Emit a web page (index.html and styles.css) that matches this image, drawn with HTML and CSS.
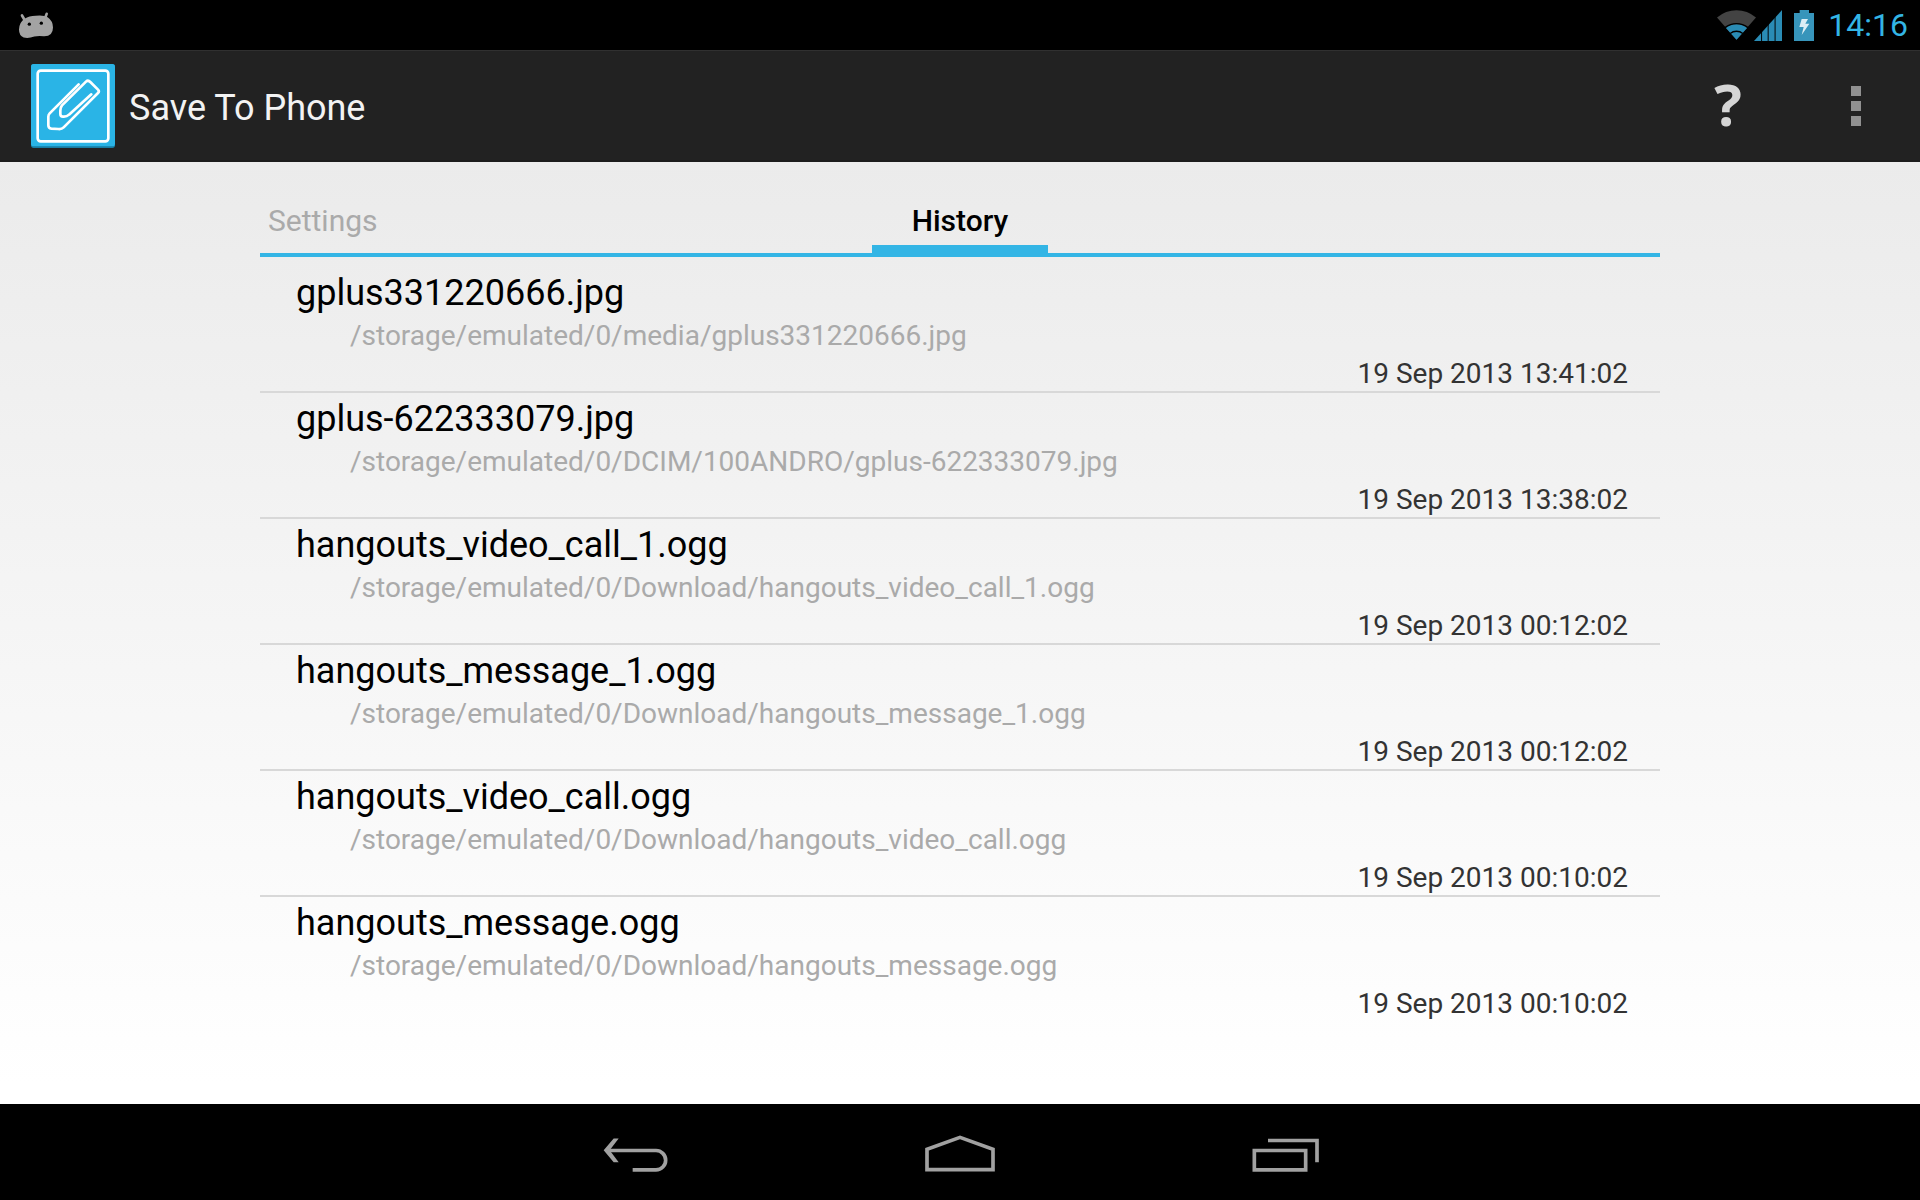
FILE: index.html
```
<!DOCTYPE html>
<html lang="en">
<head>
  <meta charset="UTF-8">
  <title>Save To Phone</title>
  <link rel="stylesheet" href="styles.css">
</head>
<body>
  <div class="status-bar">
    <svg class="robot" viewBox="0 0 102 80" width="34" height="27">
      <path d="M9 10 16 22M83 5 79 16" stroke="#a3a3a3" stroke-width="8" stroke-linecap="round"/>
      <path d="M17 20Q30 11 50 11Q72 8 86 15Q102 26 102 46Q102 73 74 72Q58 70 46 73Q28 80 14 76Q0 70 0 52Q1 30 17 20Z" fill="#a3a3a3"/>
      <circle cx="31" cy="36" r="5"/><circle cx="67" cy="33" r="5"/>
    </svg>
    <div class="indicators">
      <svg viewBox="0 0 118 90" width="39" height="30">
        <path d="M59 90 0 22Q26 0 59 0T118 22Z" fill="#434343"/>
        <path d="M59 90 27 54Q40 43 59 43T91 54Z" fill="#2a8cb5"/>
        <path d="M24 53Q40 41 59 41T94 53M40 71Q48 64 59 64T78 71" fill="none" stroke="#000" stroke-width="4"/>
      </svg>
      <svg class="signal" viewBox="0 0 85 94" width="28" height="31">
        <path d="M0 94 85 0V94Z" fill="#2a8cb5"/>
        <path d="M23 60V94M43 40V94M64 15V94" stroke="#000" stroke-width="3"/>
      </svg>
      <svg class="battery" viewBox="0 0 60 93" width="20" height="31">
        <path d="M0 9H17V0H45V9H60V93H0Z" fill="#3795bb"/>
        <path d="M23 27H42L34 41H46L23 75L29 51H16Z" fill="#dceef5"/>
      </svg>
      <span class="clock">14:16</span>
    </div>
  </div>

  <header class="action-bar">
    <svg class="app-icon" viewBox="0 0 252 252" width="84" height="84">
      <rect width="252" height="252" rx="8" fill="#187da3"/>
      <rect width="252" height="247" rx="8" fill="#2ab4e6"/>
      <g fill="none" stroke="#fff" stroke-width="8" stroke-linecap="round" stroke-linejoin="round">
        <rect x="20" y="20" width="212" height="212" rx="9"/>
        <path stroke-width="8" d="M143 61 56 148Q52 152 52 158V184Q52 193 61 194L82 195Q92 196 98 190L201 87Q206 82 201 77L178 54Q171 47 165 53L93 124Q88 130 88 140V150Q88 158 96 158Q107 159 114 152L181 91"/>
      </g>
    </svg>
    <h1>Save To Phone</h1>
    <button class="help" aria-label="Help">?</button>
    <button class="overflow" aria-label="More options">
      <svg viewBox="0 0 10 40" width="10" height="40"><path d="M0 0H10V10H0ZM0 15H10V25H0ZM0 30H10V40H0Z" fill="#919191"/></svg>
    </button>
  </header>

  <main>
    <nav class="tabs">
      <button class="tab">Settings</button>
      <button class="tab active">History</button>
    </nav>
    <ul class="history">
      <li>
        <h2>gplus331220666.jpg</h2>
        <p>/storage/emulated/0/media/gplus331220666.jpg</p>
        <time>19 Sep 2013 13:41:02</time>
      </li>
      <li>
        <h2>gplus-622333079.jpg</h2>
        <p>/storage/emulated/0/DCIM/100ANDRO/gplus-622333079.jpg</p>
        <time>19 Sep 2013 13:38:02</time>
      </li>
      <li>
        <h2>hangouts_video_call_1.ogg</h2>
        <p>/storage/emulated/0/Download/hangouts_video_call_1.ogg</p>
        <time>19 Sep 2013 00:12:02</time>
      </li>
      <li>
        <h2>hangouts_message_1.ogg</h2>
        <p>/storage/emulated/0/Download/hangouts_message_1.ogg</p>
        <time>19 Sep 2013 00:12:02</time>
      </li>
      <li>
        <h2>hangouts_video_call.ogg</h2>
        <p>/storage/emulated/0/Download/hangouts_video_call.ogg</p>
        <time>19 Sep 2013 00:10:02</time>
      </li>
      <li>
        <h2>hangouts_message.ogg</h2>
        <p>/storage/emulated/0/Download/hangouts_message.ogg</p>
        <time>19 Sep 2013 00:10:02</time>
      </li>
    </ul>
  </main>

  <footer class="nav-bar">
    <button aria-label="Back">
      <svg viewBox="0 0 216 110" width="72" height="37">
        <path d="M20 46H168A29 29 0 0 1 168 104H98" fill="none" stroke="#a1a1a1" stroke-width="11"/>
        <path d="M41 10H56L29 45L56 81H41L11 45Z" fill="#a1a1a1"/>
      </svg>
    </button>
    <button aria-label="Home">
      <svg viewBox="0 0 216 114" width="72" height="38">
        <path d="M9 107V46L108 10L207 46V107Z" fill="none" stroke="#a1a1a1" stroke-width="11"/>
      </svg>
    </button>
    <button aria-label="Recent apps">
      <svg viewBox="0 0 216 110" width="72" height="37">
        <path d="M19 46H173V104H19ZM60 16H207V81" fill="none" stroke="#a1a1a1" stroke-width="11"/>
      </svg>
    </button>
  </footer>
</body>
</html>
```
FILE: styles.css
```
* { box-sizing:border-box; }
body { margin:0; min-height:100vh; display:flex; flex-direction:column; background:#000; font-family:Roboto, sans-serif; }
svg { display:block; }
h1, h2, p, ul { margin:0; padding:0; font-weight:400; }
button { padding:0; border:none; background:none; font-family:inherit; cursor:pointer; }

.status-bar { display:flex; justify-content:space-between; align-items:center; height:50px; padding:0 12px 0 19px; }
.indicators { display:flex; align-items:center; }
.signal { margin-left:-2px; }
.battery { margin:0 14px 0 12px; }
.clock { color:#33b5e5; font-size:32px; line-height:50px; }

.action-bar { display:flex; align-items:center; height:112px; padding:0 31px; background:#222; border-top:1px solid #303030; border-bottom:2px solid #1b1b1b; }
h1 { flex:1; margin-left:14px; padding-top:4px; color:#f3f3f3; font-size:36px; }
.help { width:128px; padding-bottom:4px; color:#d5d5d5; font:700 58px/80px "Open Sans", sans-serif; }
.overflow { display:flex; justify-content:center; width:128px; margin-right:-31px; }

main { flex:1; padding:34px 260px 0; background:linear-gradient(#ebebeb, #fff 98%); }
.tabs { display:grid; grid-template-columns:1fr auto 1fr; border-bottom:4px solid #33b5e5; }
.tab { justify-self:start; padding:0 8px; border-bottom:8px solid transparent; color:#aaa; font-size:30px; line-height:49px; }
.tab.active { padding:0 40px; border-color:#33b5e5; color:#000; font-weight:500; }

.history { padding-top:10px; list-style:none; }
.history li { display:flex; flex-direction:column; padding:5px 32px 1px 36px; border-bottom:2px solid #d8d8d8; }
.history li:last-child { border-bottom:none; }
h2 { color:#000; font-size:36px; line-height:42px; }
.history p { margin:5px 0 5px 54px; color:#aaa; font-size:28px; line-height:33px; }
time { align-self:flex-end; color:#333; font-size:28px; line-height:33px; }

.nav-bar { display:flex; justify-content:center; gap:92px; height:96px; padding-top:2px; }
.nav-bar button { display:flex; justify-content:center; align-items:center; width:232px; }
```
